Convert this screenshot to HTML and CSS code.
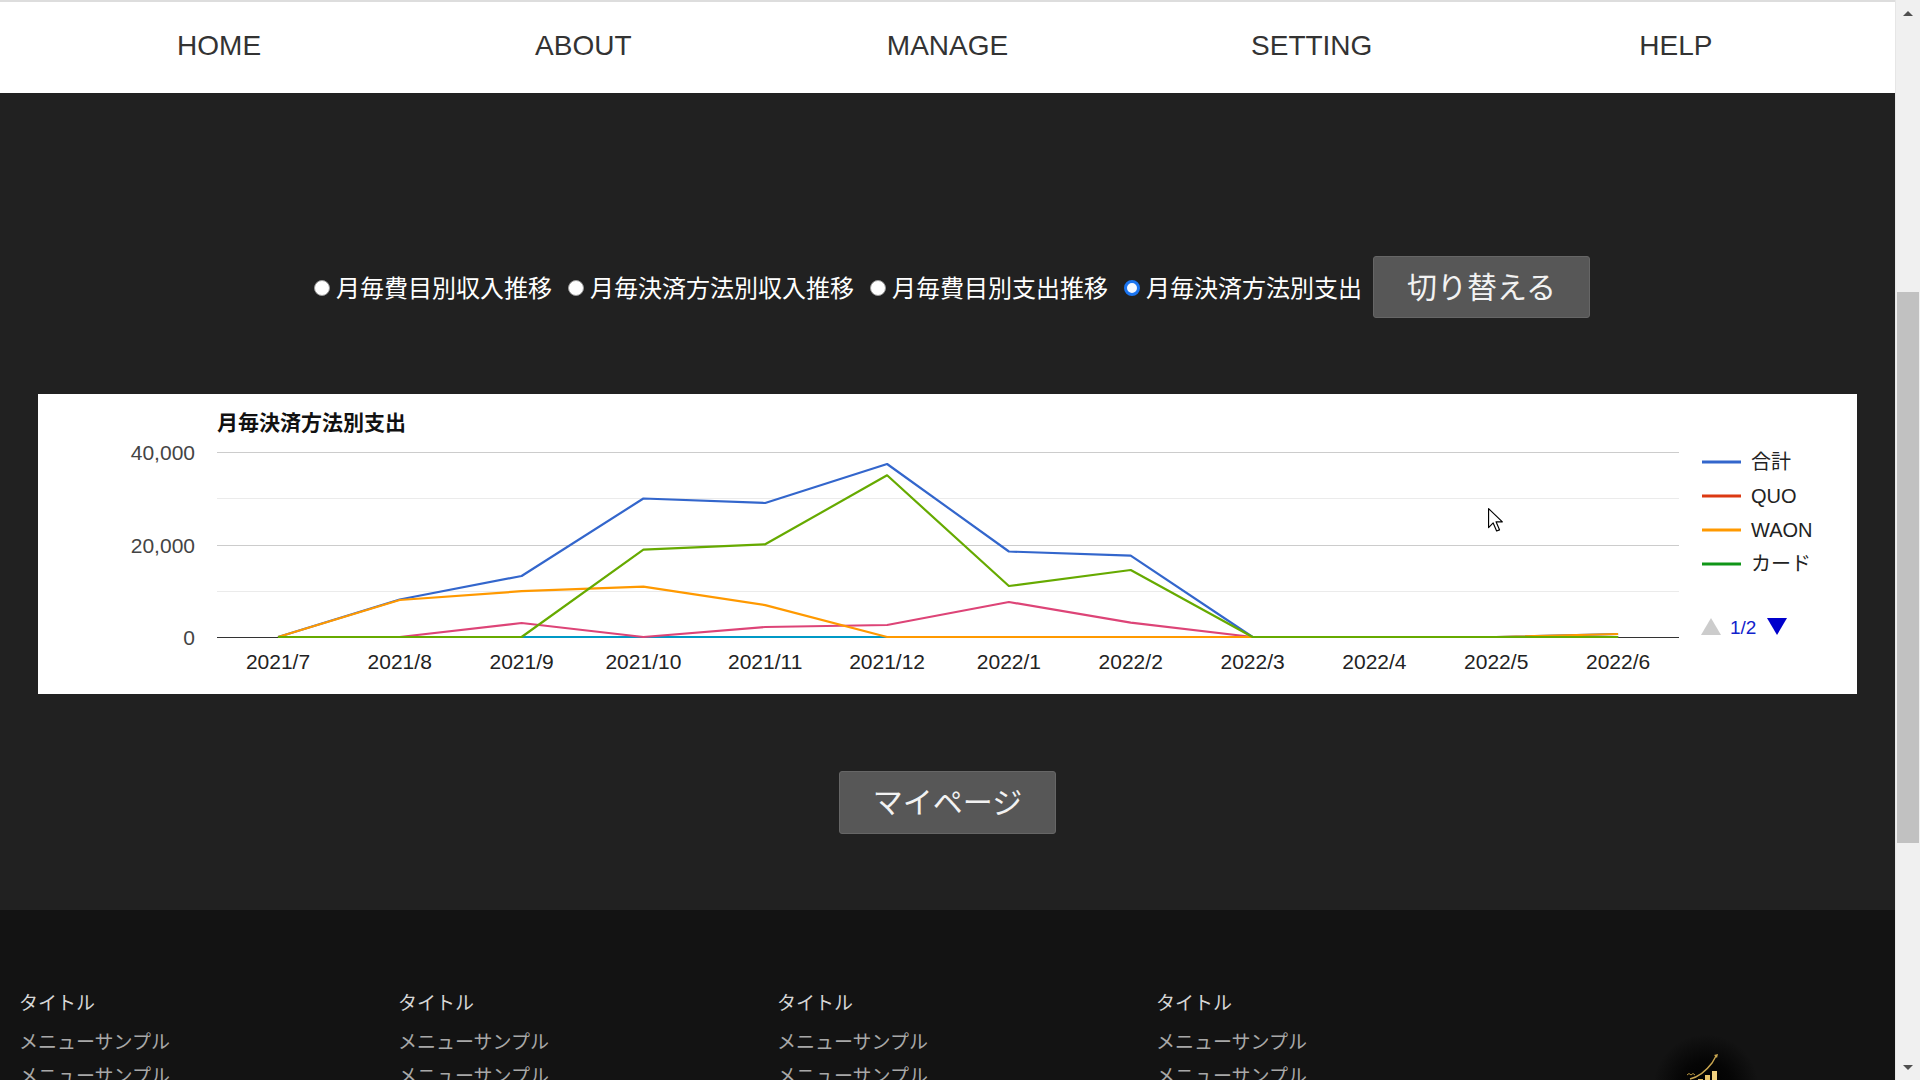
FILE: index.html
```html
<!DOCTYPE html>
<html lang="ja">
<head>
<meta charset="utf-8">
<title>月毎決済方法別支出</title>
<link rel="stylesheet" href="styles.css">
</head>
<body>
<div class="viewport">
  <div class="page">
    <header class="site-header">
      <nav class="nav">
        <a class="nav-item">HOME</a>
        <a class="nav-item">ABOUT</a>
        <a class="nav-item">MANAGE</a>
        <a class="nav-item">SETTING</a>
        <a class="nav-item">HELP</a>
      </nav>
    </header>

    <main class="main">
      <form class="switcher">
        <label class="opt"><input class="radio" type="radio" name="graph"><span>月毎費目別収入推移</span></label>
        <label class="opt"><input class="radio" type="radio" name="graph"><span>月毎決済方法別収入推移</span></label>
        <label class="opt"><input class="radio" type="radio" name="graph"><span>月毎費目別支出推移</span></label>
        <label class="opt"><input class="radio" type="radio" name="graph" checked><span>月毎決済方法別支出</span></label>
        <button type="button" class="btn btn-switch">切り替える</button>
      </form>

      <section class="chart-card">
        <svg class="chart" width="1818" height="300" viewBox="0 0 1818 300">
          <text class="c-title" x="179" y="36">月毎決済方法別支出</text>
          <!-- gridlines -->
          <line class="g-minor" x1="179" x2="1641" y1="104.5" y2="104.5"/>
          <line class="g-minor" x1="179" x2="1641" y1="197.5" y2="197.5"/>
          <line class="g-major" x1="179" x2="1641" y1="58.5" y2="58.5"/>
          <line class="g-major" x1="179" x2="1641" y1="151.5" y2="151.5"/>
          <line class="g-base" x1="179" x2="1641" y1="243.5" y2="243.5"/>
          <!-- y labels -->
          <text class="c-axis" x="157" y="66" text-anchor="end">40,000</text>
          <text class="c-axis" x="157" y="159" text-anchor="end">20,000</text>
          <text class="c-axis" x="157" y="251" text-anchor="end">0</text>
          <!-- x labels -->
          <text class="c-axis c-x" x="240" y="275" text-anchor="middle">2021/7</text>
          <text class="c-axis c-x" x="361.7" y="275" text-anchor="middle">2021/8</text>
          <text class="c-axis c-x" x="483.6" y="275" text-anchor="middle">2021/9</text>
          <text class="c-axis c-x" x="605.4" y="275" text-anchor="middle">2021/10</text>
          <text class="c-axis c-x" x="727.2" y="275" text-anchor="middle">2021/11</text>
          <text class="c-axis c-x" x="849.1" y="275" text-anchor="middle">2021/12</text>
          <text class="c-axis c-x" x="970.9" y="275" text-anchor="middle">2022/1</text>
          <text class="c-axis c-x" x="1092.7" y="275" text-anchor="middle">2022/2</text>
          <text class="c-axis c-x" x="1214.6" y="275" text-anchor="middle">2022/3</text>
          <text class="c-axis c-x" x="1336.4" y="275" text-anchor="middle">2022/4</text>
          <text class="c-axis c-x" x="1458.2" y="275" text-anchor="middle">2022/5</text>
          <text class="c-axis c-x" x="1580.1" y="275" text-anchor="middle">2022/6</text>
          <!-- series -->
          <polyline class="s s-total" points="240,243 361.7,205.5 483.6,182 605.4,104.5 727.2,109 849.1,70 970.9,157.5 1092.7,161.7 1214.6,243 1336.4,243 1458.2,243 1580.1,240"/>
          <polyline class="s s-quo" points="240,243 361.7,243 483.6,243 605.4,243 727.2,243 849.1,243 970.9,243 1092.7,243 1214.6,243 1336.4,243 1458.2,243 1580.1,243"/>
          <polyline class="s s-card" points="240,243 361.7,243 483.6,243 605.4,243 727.2,243 849.1,243 970.9,243 1092.7,243 1214.6,243 1336.4,243 1458.2,243 1580.1,243"/>
          <polyline class="s s-cyan" points="240,243 361.7,243 483.6,243 605.4,243 727.2,243 849.1,243 970.9,243 1092.7,243 1214.6,243 1336.4,243 1458.2,243 1580.1,243"/>
          <polyline class="s s-pink" points="240,243 361.7,243 483.6,229 605.4,243 727.2,233 849.1,231 970.9,208 1092.7,228.7 1214.6,243 1336.4,243 1458.2,243 1580.1,243"/>
          <polyline class="s s-waon" points="240,243 361.7,206 483.6,197.2 605.4,192.6 727.2,211.1 849.1,243 970.9,243 1092.7,243 1214.6,243 1336.4,243 1458.2,243 1580.1,240"/>
          <polyline class="s s-olive" points="240,243 361.7,243 483.6,243 605.4,155.6 727.2,150.3 849.1,81.3 970.9,192 1092.7,176 1214.6,243 1336.4,243 1458.2,243 1580.1,243"/>
          <!-- legend -->
          <line class="l l-total" x1="1664" x2="1703" y1="68" y2="68"/>
          <text class="c-legend" x="1713" y="75">合計</text>
          <line class="l l-quo" x1="1664" x2="1703" y1="102" y2="102"/>
          <text class="c-legend" x="1713" y="109">QUO</text>
          <line class="l l-waon" x1="1664" x2="1703" y1="136" y2="136"/>
          <text class="c-legend" x="1713" y="143">WAON</text>
          <line class="l l-card" x1="1664" x2="1703" y1="170" y2="170"/>
          <text class="c-legend" x="1713" y="177">カード</text>
          <polygon class="pg-off" points="1663,241 1683,241 1673,224"/>
          <text class="c-page" x="1692" y="240">1/2</text>
          <polygon class="pg-on" points="1729,224 1749,224 1739,241"/>
          <!-- mouse cursor -->
          <path class="cursor" transform="translate(1450,114) scale(1.15)" d="M0.5 0.5 L0.5 17 L4.5 13 L7.5 20 L10 19 L7 12 L12.5 12 Z"/>
        </svg>
      </section>

      <button type="button" class="btn btn-mypage">マイページ</button>
    </main>

    <footer class="footer">
      <div class="fcol">
        <p class="ftitle">タイトル</p>
        <p class="fitem">メニューサンプル</p>
        <p class="fitem">メニューサンプル</p>
      </div>
      <div class="fcol">
        <p class="ftitle">タイトル</p>
        <p class="fitem">メニューサンプル</p>
        <p class="fitem">メニューサンプル</p>
      </div>
      <div class="fcol">
        <p class="ftitle">タイトル</p>
        <p class="fitem">メニューサンプル</p>
        <p class="fitem">メニューサンプル</p>
      </div>
      <div class="fcol">
        <p class="ftitle">タイトル</p>
        <p class="fitem">メニューサンプル</p>
        <p class="fitem">メニューサンプル</p>
      </div>
      <div class="fcol fcol-logo">
        <div class="logo-glow">
          <svg class="logo" width="44" height="34" viewBox="0 0 44 34">
            <path d="M6 26 C14 24 22 18 28 10 L32 3" fill="none" stroke="#c9a650" stroke-width="1.4"/>
            <path d="M30 2 L34 1 L33 5 Z" fill="#c9a650"/>
            <rect x="14" y="26" width="5" height="8" fill="#d8b45c"/>
            <rect x="21" y="22" width="5" height="12" fill="#e8c46a"/>
            <rect x="28" y="18" width="5" height="16" fill="#f0d080"/>
            <path d="M3 22 q2 -3 4 0 q2 -3 4 0" fill="none" stroke="#b8953f" stroke-width="1"/>
          </svg>
        </div>
      </div>
    </footer>
  </div>

  <div class="scrollbar">
    <div class="sb-btn"><span class="sb-up"></span></div>
    <div class="sb-track"><div class="sb-thumb"></div></div>
    <div class="sb-btn"><span class="sb-down"></span></div>
  </div>
</div>
</body>
</html>
```

FILE: styles.css
```css
html, body {
  margin: 0;
  padding: 0;
}

body {
  background: #212121;
  font-family: "Liberation Sans", "Noto Sans CJK JP", sans-serif;
}

.viewport {
  display: flex;
  height: 100vh;
  overflow: hidden;
}

.page {
  flex: 1;
  min-width: 0;
  display: flex;
  flex-direction: column;
}

/* ---------- header ---------- */
.site-header {
  flex: none;
  height: 91px;
  background: #fff;
  border-top: 2px solid #dddddd;
}

.nav {
  box-sizing: border-box;
  height: 100%;
  display: flex;
  align-items: center;
  padding: 0 37px 3px;
}

.nav-item {
  flex: 1;
  text-align: center;
  font-family: "Liberation Sans", sans-serif;
  font-size: 28px;
  color: #333;
  cursor: pointer;
}

/* ---------- main ---------- */
.main {
  flex: none;
  background: #212121;
  padding: 163px 38px 76px;
  display: flex;
  flex-direction: column;
  align-items: center;
}

.switcher {
  display: flex;
  align-items: center;
  gap: 16px;
  height: 62px;
  margin: 0 0 0 9px;
}

.opt {
  display: flex;
  align-items: center;
  gap: 6px;
  color: #fff;
  font-family: "Noto Sans CJK JP", sans-serif;
  font-size: 24px;
  line-height: 1;
}

.radio {
  appearance: none;
  -webkit-appearance: none;
  box-sizing: border-box;
  width: 16px;
  height: 16px;
  margin: 0 0 -1px;
  border-radius: 50%;
  background: #fff;
  border: 1px solid #9a9a9a;
}

.radio:checked {
  border: 3px solid #1a74f0;
  background: #f4f8ff;
}

.btn {
  box-sizing: border-box;
  width: 217px;
  height: 62px;
  background: #575757;
  border: 1px solid #666;
  border-radius: 3px;
  color: #f2f2f2;
  font-family: "Noto Sans CJK JP", sans-serif;
  font-size: 30px;
  line-height: 1;
  padding: 0 0 5px;
}

.btn-switch {
  margin-left: -5px;
}

.btn-mypage {
  margin-top: 77px;
  height: 63px;
  padding-bottom: 6px;
}

.chart-card {
  margin-top: 76px;
  width: 100%;
  height: 300px;
  background: #fff;
}

.chart {
  display: block;
}

.c-title {
  font-family: "Noto Sans CJK JP", sans-serif;
  font-weight: bold;
  font-size: 21px;
  fill: #111;
}

.c-axis {
  font-family: "Liberation Sans", sans-serif;
  font-size: 21px;
  fill: #444;
}

.c-x {
  fill: #222;
}

.c-legend {
  font-family: "Liberation Sans", "Noto Sans CJK JP", sans-serif;
  font-size: 20px;
  fill: #222;
}

.c-page {
  font-family: "Liberation Sans", sans-serif;
  font-size: 19px;
  fill: #1122cc;
}

.pg-off { fill: #cccccc; }
.pg-on { fill: #0000cc; }

.g-major { stroke: #cccccc; stroke-width: 1; }
.g-minor { stroke: #ebebeb; stroke-width: 1; }
.g-base { stroke: #333333; stroke-width: 1; }

.s {
  fill: none;
  stroke-width: 2.2;
  stroke-linejoin: round;
}

.s-total { stroke: #3366cc; }
.s-quo { stroke: #dc3912; }
.s-card { stroke: #109618; }
.s-cyan { stroke: #0099c6; }
.s-pink { stroke: #dd4477; }
.s-waon { stroke: #ff9900; }
.s-olive { stroke: #66aa00; }

.l { stroke-width: 3; }
.l-total { stroke: #3366cc; }
.l-quo { stroke: #dc3912; }
.l-waon { stroke: #ff9900; }
.l-card { stroke: #109618; }

.cursor {
  fill: #fff;
  stroke: #000;
  stroke-width: 1;
  stroke-linejoin: round;
}

/* ---------- footer ---------- */
.footer {
  flex: 1;
  background: #131313;
  display: grid;
  grid-template-columns: repeat(5, 1fr);
  padding-top: 77px;
}

.fcol {
  padding-left: 19px;
  font-family: "Noto Sans CJK JP", sans-serif;
  font-size: 19px;
}

.fcol p {
  margin: 0;
}

.ftitle {
  color: #d6d6d6;
  line-height: 30px;
  margin-bottom: 7px !important;
}

.fitem {
  color: #a8a8a8;
  line-height: 34px;
}

.fcol-logo {
  padding-left: 0;
  display: flex;
  justify-content: center;
  align-items: flex-start;
}

.logo-glow {
  margin-top: 40px;
  width: 120px;
  height: 100px;
  display: flex;
  justify-content: center;
  padding-top: 26px;
  box-sizing: border-box;
  background: radial-gradient(circle at 50% 60%, #000 0%, #050505 30%, rgba(19,19,19,0) 62%);
}

.logo {
  display: block;
}

/* ---------- fake scrollbar ---------- */
.scrollbar {
  flex: none;
  width: 25px;
  background: #f0f0f0;
  display: flex;
  flex-direction: column;
  border-left: 1px solid #e6e6e6;
  box-sizing: border-box;
}

.sb-btn {
  height: 26px;
  display: flex;
  align-items: center;
  justify-content: center;
}

.sb-up {
  width: 0;
  height: 0;
  border-left: 5px solid transparent;
  border-right: 5px solid transparent;
  border-bottom: 5px solid #505050;
}

.sb-down {
  width: 0;
  height: 0;
  border-left: 5px solid transparent;
  border-right: 5px solid transparent;
  border-top: 5px solid #505050;
}

.sb-track {
  flex: 1;
  display: flex;
  flex-direction: column;
}

.sb-thumb {
  margin: 266px 1px 0 1px;
  height: 551px;
  background: #c1c1c1;
}
```
